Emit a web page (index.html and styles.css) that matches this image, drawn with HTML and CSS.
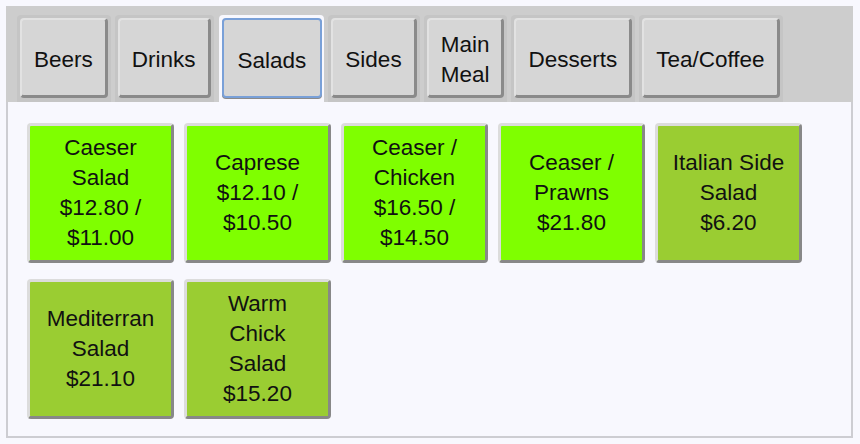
FILE: index.html
```html
<html>

<head>
    <link rel="stylesheet" href="styles.css">
</head>

<body>
    <div class="menu">
        <div class="tabs">
            <div class="tab"><button class="tab-btn">Beers</button></div>
            <div class="tab"><button class="tab-btn">Drinks</button></div>
            <div class="tab active"><button class="tab-btn">Salads</button></div>
            <div class="tab"><button class="tab-btn">Sides</button></div>
            <div class="tab"><button class="tab-btn">Main<br>Meal</button></div>
            <div class="tab"><button class="tab-btn">Desserts</button></div>
            <div class="tab"><button class="tab-btn">Tea/Coffee</button></div>
        </div>
        <div class="items">
            <div class="item">Caeser<br>Salad<br>$12.80 /<br>$11.00</div>
            <div class="item">Caprese<br>$12.10 /<br>$10.50</div>
            <div class="item">Ceaser /<br>Chicken<br>$16.50 /<br>$14.50</div>
            <div class="item">Ceaser /<br>Prawns<br>$21.80</div>
            <div class="item side">Italian Side<br>Salad<br>$6.20</div>
            <div class="item side">Mediterran<br>Salad<br>$21.10</div>
            <div class="item side">Warm<br>Chick<br>Salad<br>$15.20</div>
        </div>
    </div>
</body>

</html>
```

FILE: styles.css
```css
body {
    margin: 6px;
    background: #f8f8fe;
    font-family: 'Liberation Sans', Arial, sans-serif;
    color: #111;
}
.menu {
    width: 847px;
}
.tabs {
    display: flex;
    background: #cdcdcd;
    padding: 9px 0 0 11px;
    height: 87px;
}
.tab {
    background: #c5c5c5;
    padding: 3px;
    margin-right: 4px;
    border-radius: 4px 4px 0 0;
}
.tab.active {
    background: #f8f8fe;
    margin: 0 4px 0 1px;
    padding: 3px 2px 3px 3px;
}
.tab-btn {
    display: block;
    height: 80px;
    padding: 5px 12px 0 12px;
    font-family: 'Liberation Sans', Arial, sans-serif;
    font-size: 22.5px;
    line-height: 30px;
    color: #111;
    background: #d6d6d6;
    border-style: solid;
    border-width: 2px 3px 3px 2px;
    border-color: #e2e2e2 #8a8a8a #8a8a8a #e2e2e2;
    border-radius: 4px;
}
.tab.active .tab-btn {
    padding: 5px 14px 0 14px;
    border-width: 2px;
    border-color: #79a0d8;
    box-shadow: 0 1px 0 #8a8a8a;
}
.items {
    height: 313px;
    border: 2px solid #cdcdd2;
    border-top: 0;
    padding: 21px 0 0 19px;
    display: grid;
    grid-template-columns: repeat(5, 147px);
    grid-auto-rows: 140px;
    column-gap: 10px;
    row-gap: 16px;
    align-content: start;
}
.item {
    display: flex;
    align-items: center;
    justify-content: center;
    text-align: center;
    font-size: 22.5px;
    line-height: 30px;
    background: #7fff00;
    border-style: solid;
    border-width: 3px;
    border-color: #dcdcdc #888 #888 #dcdcdc;
    border-radius: 4px;
}
.item.side {
    background: #9acd32;
}
```
